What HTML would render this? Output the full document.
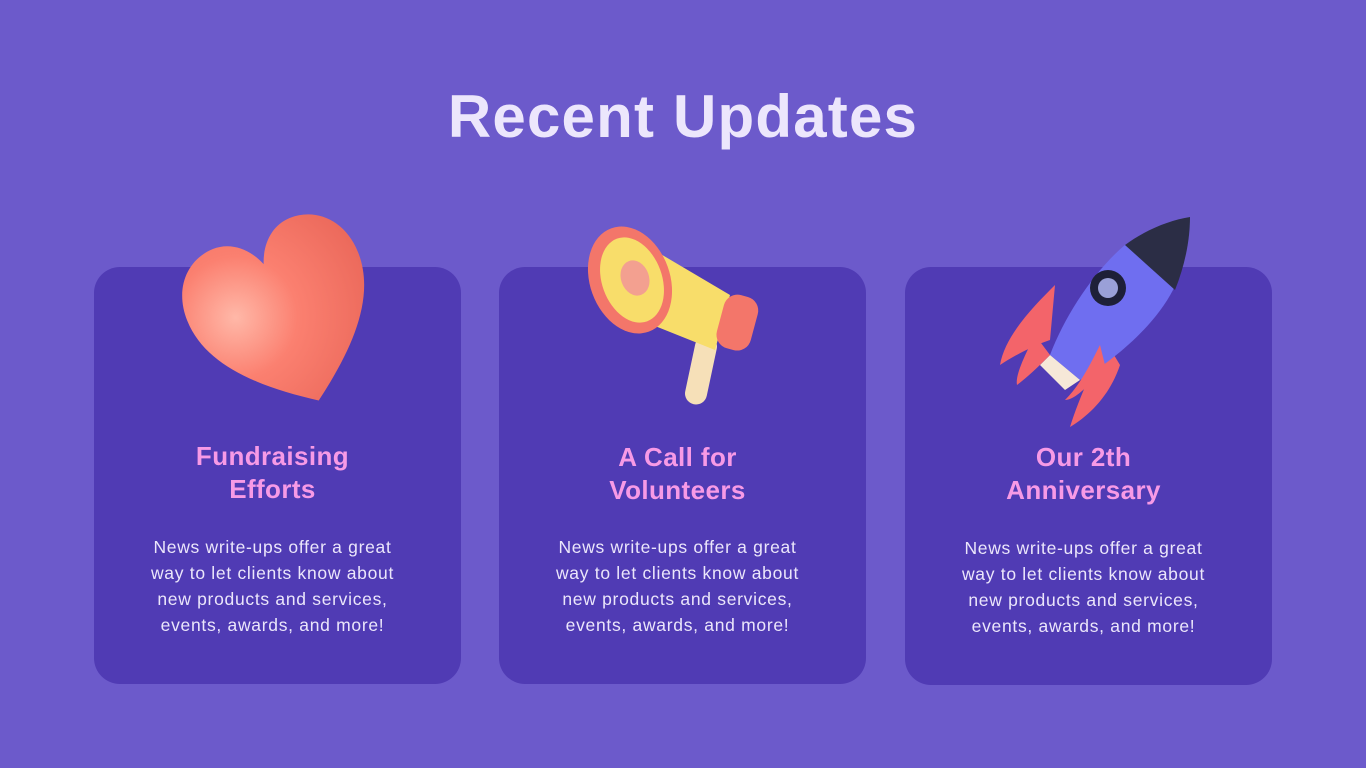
<!DOCTYPE html>
<html><head><style>
body{margin:0;width:1366px;height:768px;background:#6c5acb;font-family:"Liberation Sans",sans-serif;position:relative;overflow:hidden}
h1{position:absolute;top:82px;left:0;width:1366px;text-align:center;margin:0;font-size:60px;font-weight:bold;color:#ece6fc;letter-spacing:1.2px}
.card{position:absolute;top:267px;width:367px;height:417px;background:#503bb4;border-radius:26px}
.h{position:absolute;top:441px;width:357px;text-align:center;color:#f79ae6;font-size:26px;line-height:33px;font-weight:bold;letter-spacing:0.4px}
.p{position:absolute;top:534px;width:357px;text-align:center;color:#ebe6fb;font-size:17.5px;line-height:26px;letter-spacing:0.7px}
svg{position:absolute}
</style></head><body>
<h1>Recent Updates</h1>
<div class="card" style="left:94px"></div>
<div class="card" style="left:499px"></div>
<div class="card" style="left:905px;height:418px"></div>

<svg style="left:170px;top:205px" width="210" height="215" viewBox="0 0 210 215">
<defs><radialGradient id="hg" cx="0.25" cy="0.4" r="0.75"><stop offset="0" stop-color="#ffb8a8"/><stop offset="0.45" stop-color="#fb8070"/><stop offset="1" stop-color="#ec6a5c"/></radialGradient></defs>
<g transform="translate(115 112) rotate(-22) scale(0.92 1.0) translate(-100 -95)">
<path d="M100 185 C45 150 0 110 0 62 C0 27 25 5 55 5 C75 5 92 18 100 38 C108 18 125 5 145 5 C175 5 200 27 200 62 C200 110 155 150 100 185Z" fill="url(#hg)"/>
</g>
</svg>

<svg style="left:580px;top:210px" width="190" height="200" viewBox="0 0 190 200">
<rect x="110" y="125" width="22" height="70" rx="11" fill="#f6e0b8" transform="rotate(12 121 160)"/>
<path d="M40 20 L150 85 L135 140 L35 100Z" fill="#f8dd6a"/>
<rect x="140" y="85" width="35" height="55" rx="14" fill="#f3766a" transform="rotate(15 157 112)"/>
<ellipse cx="50" cy="70" rx="40" ry="55" fill="#f3766a" transform="rotate(-20 50 70)"/>
<ellipse cx="52" cy="70" rx="30" ry="44" fill="#f8dd6a" transform="rotate(-20 52 70)"/>
<ellipse cx="55" cy="68" rx="14" ry="18" fill="#f3a090" transform="rotate(-20 55 68)"/>
</svg>

<svg style="left:995px;top:215px" width="200" height="215" viewBox="0 0 200 215">
<path d="M60 70 C40 90 10 120 5 150 C20 140 40 130 55 125Z" fill="#f3646a"/>
<path d="M110 125 C100 150 85 180 75 212 C95 200 115 180 125 150Z" fill="#f3646a"/>
<path d="M195 2 C175 5 150 15 130 30 C100 55 70 100 55 140 L85 165 C120 145 160 110 178 75 C190 50 195 25 195 2Z" fill="#6f6ef0"/>
<path d="M195 2 C175 5 150 15 130 30 L180 75 C190 50 195 25 195 2Z" fill="#2b2d45"/>
<circle cx="113" cy="73" r="18" fill="#1e2038"/><circle cx="113" cy="73" r="10" fill="#9aa0d8"/>
<path d="M55 140 L85 165 L70 175 L45 150Z" fill="#f6e8d8"/>
<path d="M40 120 C30 140 20 160 22 170 C35 160 45 150 55 140Z" fill="#f3646a"/>
<path d="M105 130 C95 150 85 170 70 185 C80 185 95 170 110 150Z" fill="#f3646a"/>
</svg>

<div class="h" style="left:94px;top:440px">Fundraising<br>Efforts</div>
<div class="h" style="left:499px">A Call for<br>Volunteers</div>
<div class="h" style="left:905px">Our 2th<br>Anniversary</div>
<div class="p" style="left:94px">News write-ups offer a great<br>way to let clients know about<br>new products and services,<br>events, awards, and more!</div>
<div class="p" style="left:499px">News write-ups offer a great<br>way to let clients know about<br>new products and services,<br>events, awards, and more!</div>
<div class="p" style="left:905px;top:535px">News write-ups offer a great<br>way to let clients know about<br>new products and services,<br>events, awards, and more!</div>
</body></html>
